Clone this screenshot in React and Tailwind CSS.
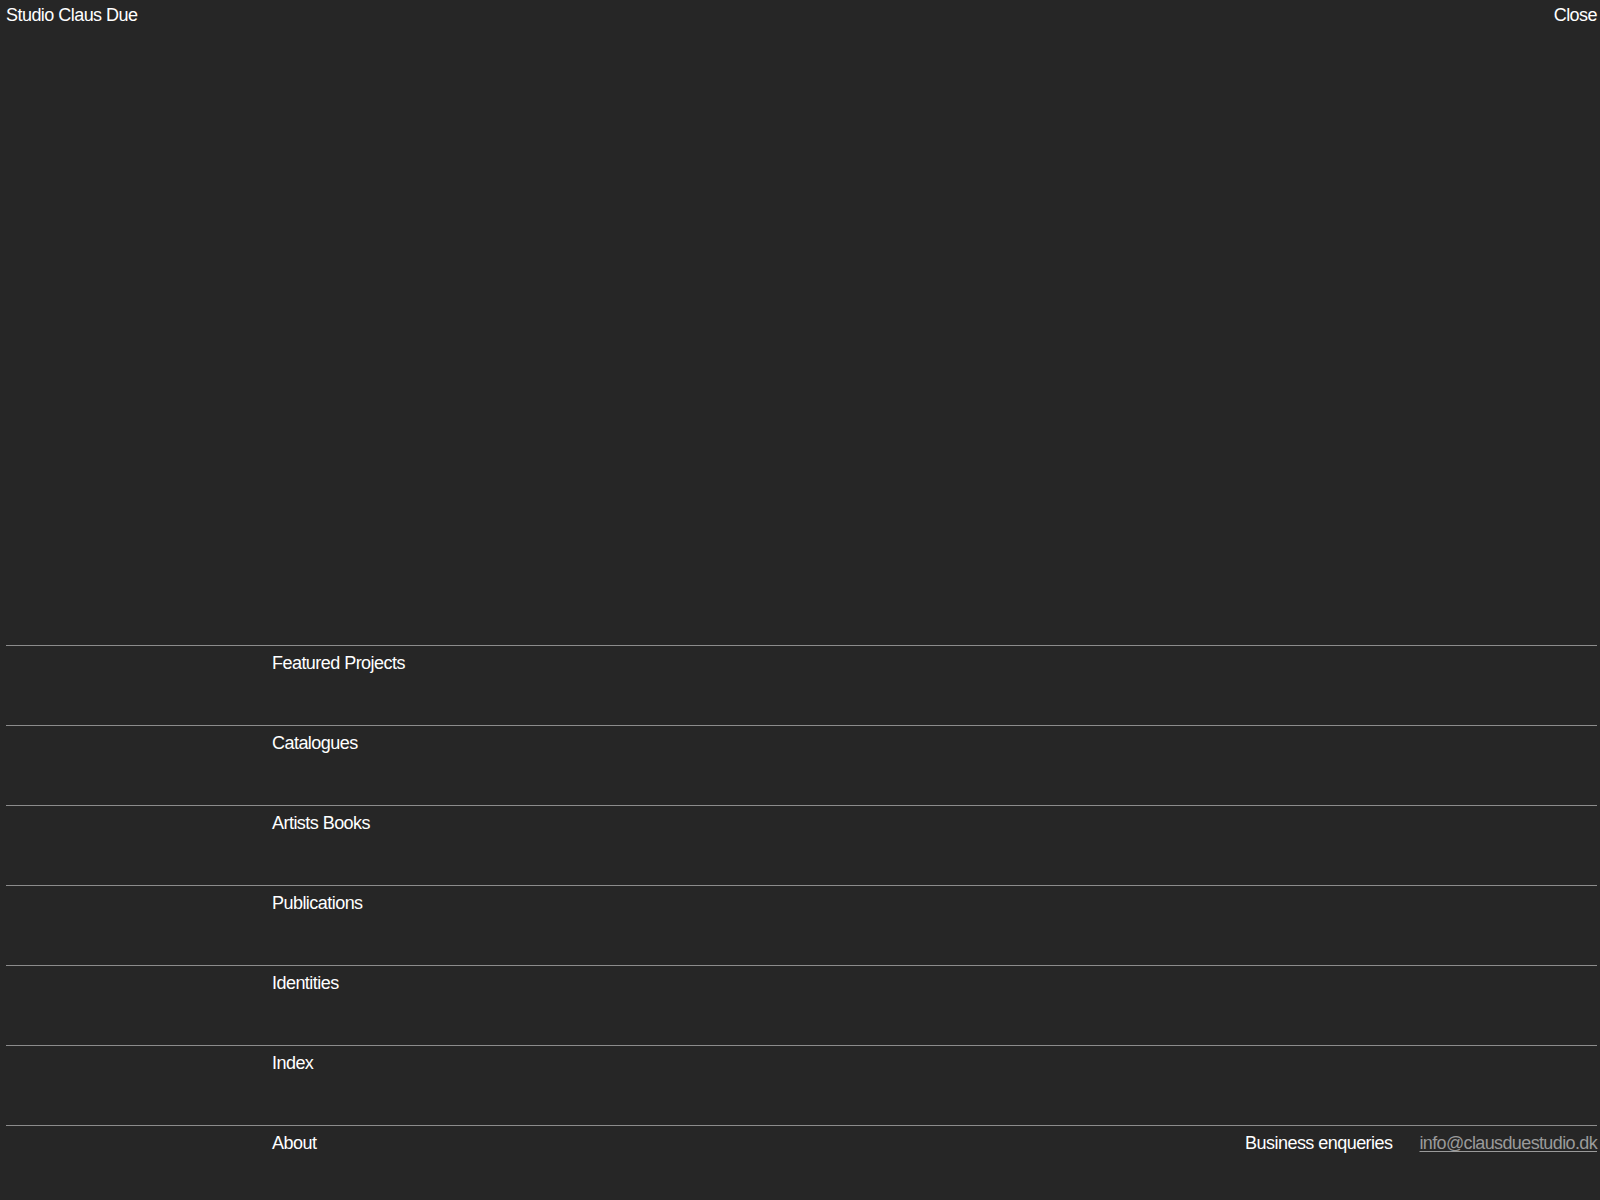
import React from 'react';

const items = [
    'Featured Projects',
    'Catalogues',
    'Artists Books',
    'Publications',
    'Identities',
    'Index',
];

const App = () => {
    return (
        <div
            className="h-screen overflow-hidden bg-[#262626] text-white flex flex-col text-[18px] leading-[1.2] tracking-[-0.03em]"
            style={{ fontFamily: '"Liberation Sans", Arial, sans-serif' }}
        >
            {/* Header */}
            <header className="flex justify-between items-start pl-[6px] pr-[3px] pt-[5px]">
                <span>Studio Claus Due</span>
                <button>Close</button>
            </header>

            {/* Menu */}
            <nav className="mt-auto px-[6px] pr-[3px]">
                {items.map((item) => (
                    <div key={item} className="h-[80px] border-t border-[#8c8c8c] grid grid-cols-[266px_1fr] pt-[7px]">
                        <div />
                        <a className="self-start">{item}</a>
                    </div>
                ))}
                <div className="h-[75px] border-t border-[#8c8c8c] grid grid-cols-[266px_1fr_auto] pt-[7px]">
                    <div />
                    <a className="self-start">About</a>
                    <div className="flex gap-[27px] self-start">
                        <span>Business enqueries</span>
                        <a className="text-[#9a9a9a] underline underline-offset-2 tracking-[-0.035em]">info@clausduestudio.dk</a>
                    </div>
                </div>
            </nav>
        </div>
    );
};

export default App;
